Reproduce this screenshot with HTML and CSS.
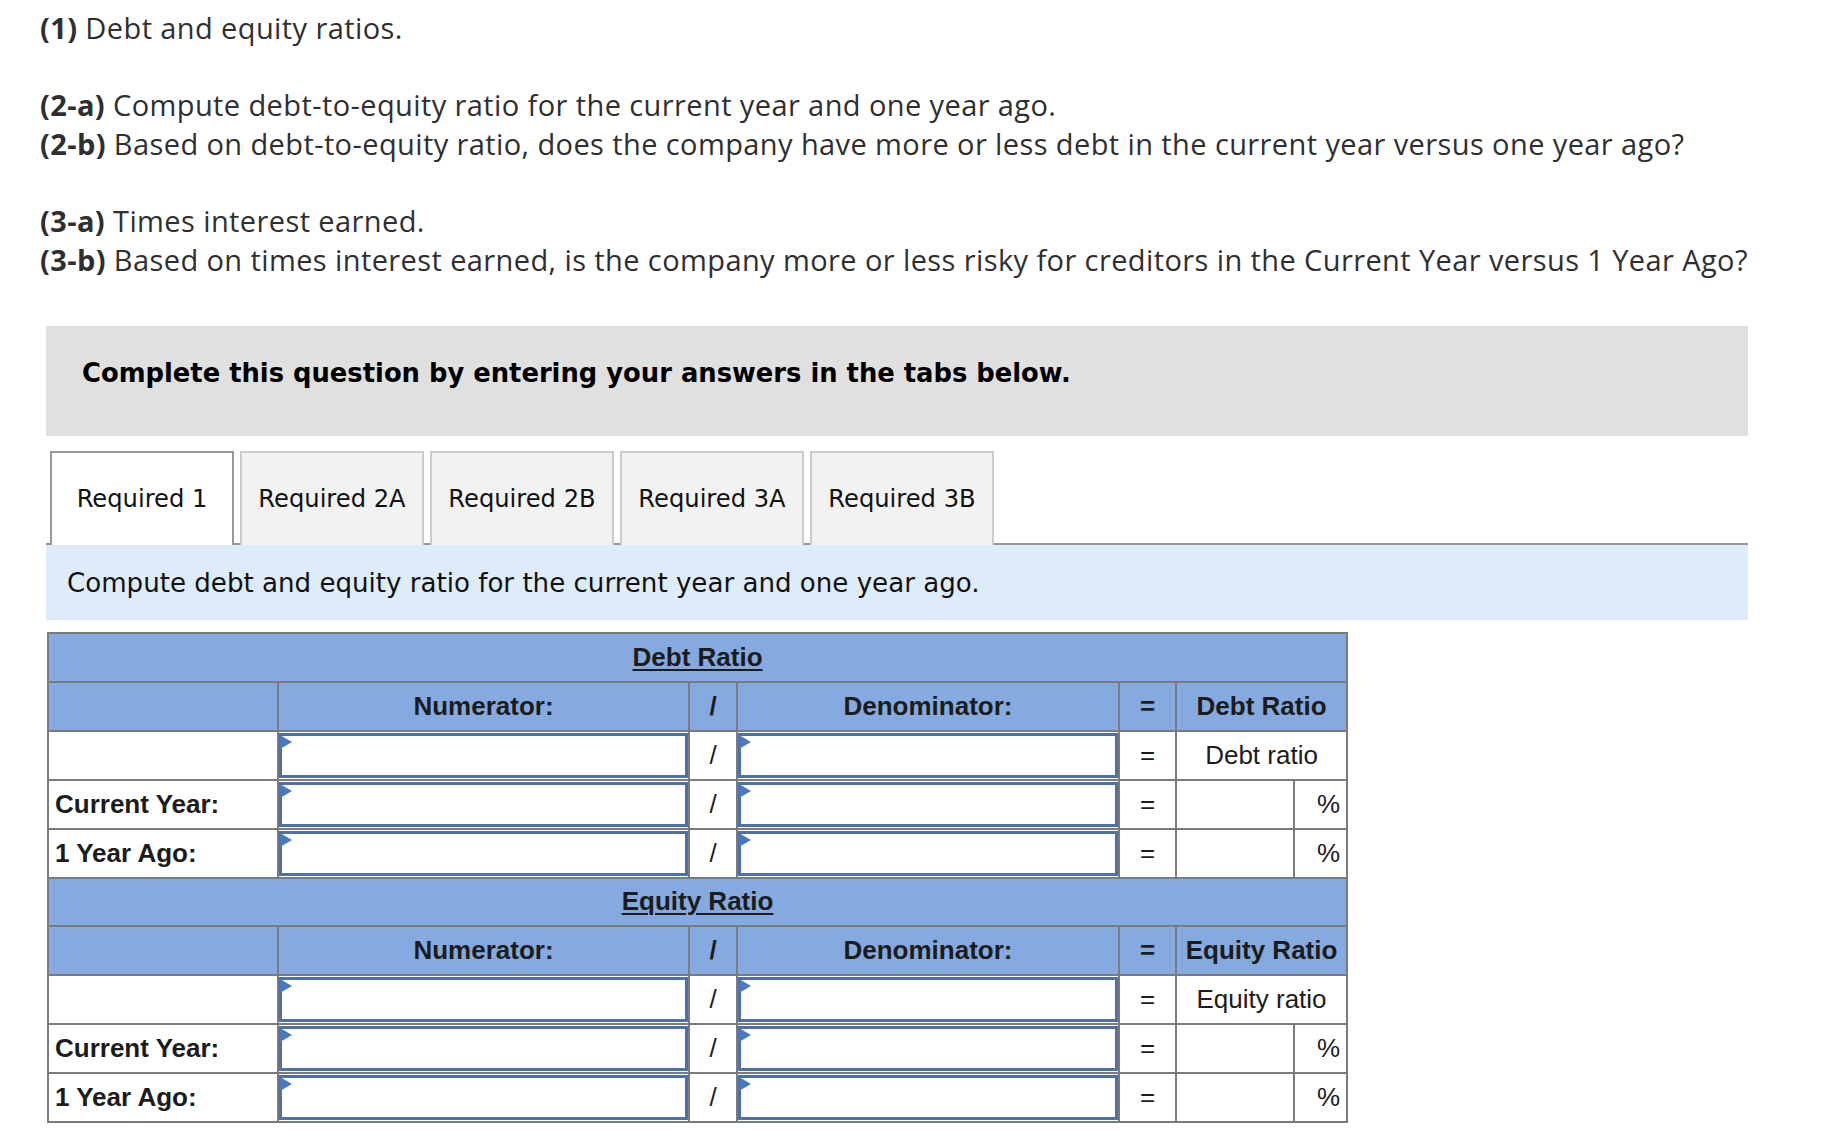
FILE: index.html
```html
<!DOCTYPE html>
<html lang="en">
<head>
<meta charset="utf-8">
<title>Debt and equity ratios</title>
<link rel="stylesheet" href="styles.css">
</head>
<body>
<div class="page">
  <div class="question">
    <p><b>(1)</b> Debt and equity ratios.</p>
    <p><b>(2-a)</b> Compute debt-to-equity ratio for the current year and one year ago.<br><b>(2-b)</b> Based on debt-to-equity ratio, does the company have more or less debt in the current year versus one year ago?</p>
    <p><b>(3-a)</b> Times interest earned.<br><b>(3-b)</b> Based on times interest earned, is the company more or less risky for creditors in the Current Year versus 1 Year Ago?</p>
  </div>

  <div class="notice">Complete this question by entering your answers in the tabs below.</div>

  <div class="tabs">
    <div class="tab active">Required 1</div>
    <div class="tab">Required 2A</div>
    <div class="tab">Required 2B</div>
    <div class="tab">Required 3A</div>
    <div class="tab">Required 3B</div>
  </div>

  <div class="instruction">Compute debt and equity ratio for the current year and one year ago.</div>

  <table class="ratios">
    <colgroup>
      <col class="c-label">
      <col class="c-num">
      <col class="c-op">
      <col class="c-den">
      <col class="c-eq">
      <col class="c-val">
      <col class="c-pct">
    </colgroup>
    <tbody>
      <tr class="head">
        <td colspan="7" class="title"><u>Debt Ratio</u></td>
      </tr>
      <tr class="head">
        <td></td>
        <td class="center">Numerator:</td>
        <td class="center">/</td>
        <td class="center">Denominator:</td>
        <td class="center">=</td>
        <td colspan="2" class="center">Debt Ratio</td>
      </tr>
      <tr>
        <td></td>
        <td class="inp"><div class="field"></div></td>
        <td class="center">/</td>
        <td class="inp"><div class="field"></div></td>
        <td class="center">=</td>
        <td colspan="2" class="center">Debt ratio</td>
      </tr>
      <tr>
        <td class="label">Current Year:</td>
        <td class="inp"><div class="field"></div></td>
        <td class="center">/</td>
        <td class="inp"><div class="field"></div></td>
        <td class="center">=</td>
        <td></td>
        <td class="pct">%</td>
      </tr>
      <tr>
        <td class="label">1 Year Ago:</td>
        <td class="inp"><div class="field"></div></td>
        <td class="center">/</td>
        <td class="inp"><div class="field"></div></td>
        <td class="center">=</td>
        <td></td>
        <td class="pct">%</td>
      </tr>
      <tr class="head">
        <td colspan="7" class="title"><u>Equity Ratio</u></td>
      </tr>
      <tr class="head">
        <td></td>
        <td class="center">Numerator:</td>
        <td class="center">/</td>
        <td class="center">Denominator:</td>
        <td class="center">=</td>
        <td colspan="2" class="center">Equity Ratio</td>
      </tr>
      <tr>
        <td></td>
        <td class="inp"><div class="field"></div></td>
        <td class="center">/</td>
        <td class="inp"><div class="field"></div></td>
        <td class="center">=</td>
        <td colspan="2" class="center">Equity ratio</td>
      </tr>
      <tr>
        <td class="label">Current Year:</td>
        <td class="inp"><div class="field"></div></td>
        <td class="center">/</td>
        <td class="inp"><div class="field"></div></td>
        <td class="center">=</td>
        <td></td>
        <td class="pct">%</td>
      </tr>
      <tr>
        <td class="label">1 Year Ago:</td>
        <td class="inp"><div class="field"></div></td>
        <td class="center">/</td>
        <td class="inp"><div class="field"></div></td>
        <td class="center">=</td>
        <td></td>
        <td class="pct">%</td>
      </tr>
    </tbody>
  </table>
</div>
</body>
</html>
```

FILE: styles.css
```css
html, body {
  margin: 0;
  padding: 0;
  background: #ffffff;
}

.page {
  padding: 9px 0 0 46px;
  width: 1702px;
}

.question {
  margin-left: -6px;
  font-family: "Open Sans", "Lato", sans-serif;
  font-size: 29px;
  letter-spacing: 0.4px;
  line-height: 38.6px;
  color: #2f2f2f;
}

.question p {
  margin: 0 0 38.6px 0;
}

.question b {
  font-weight: 700;
}

.notice {
  margin-top: 47px;
  height: 110px;
  box-sizing: border-box;
  padding: 29px 36px 0 36px;
  background: #e0e0e0;
  font-family: "DejaVu Sans", Verdana, sans-serif;
  font-weight: 700;
  font-size: 25.8px;
  line-height: 36px;
  color: #000000;
}

.tabs {
  margin-top: 15px;
  display: flex;
  gap: 6px;
  padding-left: 4px;
  border-bottom: 2px solid #979797;
  height: 92px;
}

.tab {
  width: 184px;
  box-sizing: border-box;
  height: 94px;
  display: flex;
  align-items: center;
  justify-content: center;
  background: #f2f2f2;
  border: 2px solid #cccccc;
  border-bottom: none;
  font-family: "DejaVu Sans", Verdana, sans-serif;
  font-size: 24.2px;
  color: #111111;
  position: relative;
}

.tab.active {
  background: #ffffff;
  border-color: #999999;
  z-index: 1;
}

.instruction {
  height: 75px;
  box-sizing: border-box;
  padding: 0 0 0 21px;
  display: flex;
  align-items: center;
  background: #deebf8;
  font-family: "DejaVu Sans", Verdana, sans-serif;
  font-size: 26.1px;
  color: #111111;
}

.ratios {
  margin-top: 12px;
  margin-left: 1px;
  border-collapse: collapse;
  table-layout: fixed;
  width: 1299px;
  font-family: "Liberation Sans", Arial, sans-serif;
  font-size: 26px;
  color: #1c1c1c;
}

.c-label { width: 230px; }
.c-num { width: 411px; }
.c-op { width: 48px; }
.c-den { width: 382px; }
.c-eq { width: 57px; }
.c-val { width: 118px; }
.c-pct { width: 53px; }

.ratios tr {
  height: 48.7px;
}

.ratios td {
  border: 2px solid #7b7b7b;
  padding: 0 6px;
  vertical-align: middle;
  background: #ffffff;
  white-space: nowrap;
}

.ratios tr.head td {
  background: #84aadf;
  font-weight: 700;
}

.ratios td.title {
  text-align: center;
}

.ratios td.title u {
  text-decoration-thickness: 2px;
  text-underline-offset: 3px;
}

.ratios td.center {
  text-align: center;
}

.ratios td.label {
  font-weight: 700;
}

.ratios td.pct {
  text-align: right;
}

.ratios td.inp {
  padding: 1px 0 1px 0;
}

.field {
  position: relative;
  height: 45px;
  box-sizing: border-box;
  border: 3px solid #4d70a8;
  background: #ffffff;
}

.field::before {
  content: "";
  position: absolute;
  left: -2px;
  top: -1px;
  width: 0;
  height: 0;
  border-top: 7px solid transparent;
  border-bottom: 7px solid transparent;
  border-left: 12px solid #4a78c2;
}
```
